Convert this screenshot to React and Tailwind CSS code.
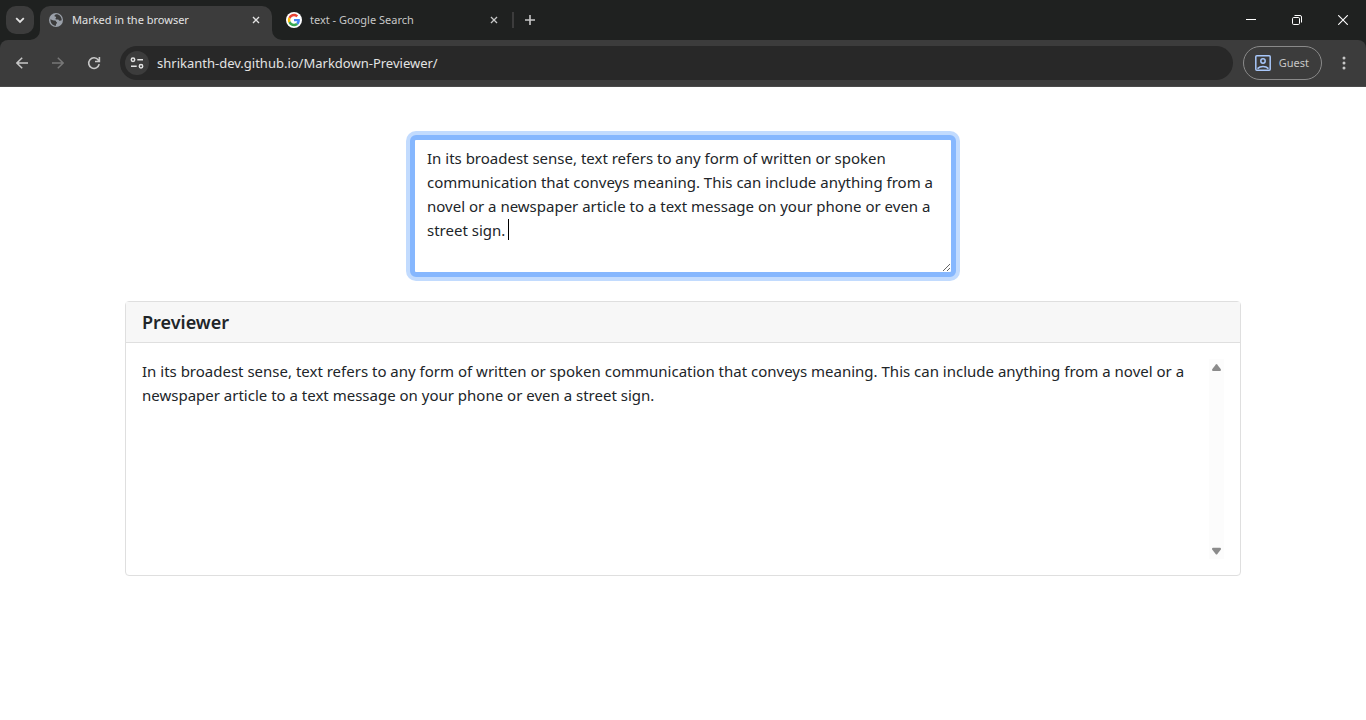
import { useState } from "react";

const INITIAL_TEXT =
  "In its broadest sense, text refers to any form of written or spoken communication that conveys meaning. This can include anything from a novel or a newspaper article to a text message on your phone or even a street sign. ";

function CloseGlyph({ className }) {
  return (
    <svg viewBox="0 0 10 10" className={className} fill="none" stroke="currentColor" strokeWidth="1.6" aria-hidden="true">
      <path d="M1.2 1.2 8.8 8.8M8.8 1.2 1.2 8.8" />
    </svg>
  );
}

function GlobeIcon() {
  return (
    <svg viewBox="0 0 16 16" className="size-4 shrink-0" aria-hidden="true">
      <circle cx="8" cy="8" r="7" fill="#9aa0a9" />
      <path
        d="M2.4 7.2 4.8 8.2c.9.3 1.5.1 2.3.3 1 .3.7 1.4 1.6 1.7.6.2.4.9-.1 1.3-.7.5-.6 1-.6 2.2C5 13.7 2.2 11 2.4 7.2ZM8.2 2.3c-.9.5-1.900.9-1.7 1.8.2.8 1.4.5 1.6 1.3.2.7-1 .9-.7 1.6.4.8 1.7.2 2.6.5.9.4 1 1.3 2 1.3.7 0 1.2-.4 1.7-.6C13.7 5 11.5 2.3 8.2 2.3Z"
        fill="#3c3c3c"
      />
    </svg>
  );
}

function GoogleIcon() {
  return (
    <svg viewBox="0 0 48 48" className="size-4 shrink-0" aria-hidden="true">
      <circle cx="24" cy="24" r="24" fill="#fff" />
      <g transform="translate(5.5 5.5) scale(.77)">
        <path fill="#EA4335" d="M24 9.500c3.540 0 6.710 1.220 9.210 3.600l6.850-6.850C35.900 2.380 30.470 0 24 0 14.620 0 6.510 5.380 2.560 13.220l7.980 6.190C12.430 13.720 17.740 9.500 24 9.500z" />
        <path fill="#4285F4" d="M46.980 24.550c0-1.570-.15-3.090-.38-4.550H24v9.020h12.940c-.58 2.960-2.260 5.480-4.780 7.180l7.730 6c4.510-4.180 7.090-10.360 7.090-17.650z" />
        <path fill="#FBBC05" d="M10.530 28.590c-.48-1.450-.76-2.990-.76-4.590s.27-3.140.76-4.590l-7.980-6.190C.92 16.460 0 20.120 0 24c0 3.880.92 7.540 2.560 10.780l7.970-6.190z" />
        <path fill="#34A853" d="M24 48c6.480 0 11.930-2.130 15.890-5.810l-7.730-6c-2.150 1.450-4.920 2.300-8.160 2.300-6.260 0-11.570-4.220-13.470-9.910l-7.980 6.190C6.510 42.620 14.620 48 24 48z" />
      </g>
    </svg>
  );
}

function TabStrip() {
  return (
    <header className="flex h-10 items-end bg-[#1f2120] pl-1.5 text-[#e3e3e3]">
      <button type="button" aria-label="Search tabs" className="mb-1.5 grid h-7 w-7 shrink-0 place-items-center rounded-[10px] bg-[#3c3c3c]">
        <svg viewBox="0 0 10 10" className="size-2.5" fill="none" stroke="currentColor" strokeWidth="1.8" aria-hidden="true">
          <path d="M1.2 3.2 5 7l3.800-3.800" />
        </svg>
      </button>
      <div className="relative ml-1.5 flex h-[34px] w-[232px] shrink-0 items-center rounded-t-[10px] bg-[#3c3c3c] pr-3 pb-1.5 pl-2">
        <svg viewBox="0 0 10 10" className="absolute bottom-0 -left-2.5 size-2.5" fill="#3c3c3c" aria-hidden="true">
          <path d="M10 0v10H0A10 10 0 0 0 10 0Z" />
        </svg>
        <svg viewBox="0 0 10 10" className="absolute -right-2.5 bottom-0 size-2.5" fill="#3c3c3c" aria-hidden="true">
          <path d="M0 0v10h10A10 10 0 0 1 0 0Z" />
        </svg>
        <GlobeIcon />
        <span className="ml-2 flex-1 text-[11px] leading-4 whitespace-nowrap">Marked in the browser</span>
        <button type="button" aria-label="Close Marked in the browser">
          <CloseGlyph className="size-2" />
        </button>
      </div>
      <div className="flex h-[34px] w-60 shrink-0 items-center pr-3.5 pb-1.5 pl-3.5 text-[#c7c7c7]">
        <GoogleIcon />
        <span className="ml-2 flex-1 text-[11px] leading-4 whitespace-nowrap">text - Google Search</span>
        <button type="button" aria-label="Close text - Google Search">
          <CloseGlyph className="size-2" />
        </button>
      </div>
      <div className="mb-3 h-4 w-0.5 shrink-0 bg-[#3c3c3c]" />
      <button type="button" aria-label="New tab" className="mb-2 ml-1 grid size-6 place-items-center text-[#c7c7c7]">
        <svg viewBox="0 0 12 12" className="size-3" fill="none" stroke="currentColor" strokeWidth="1.6" aria-hidden="true">
          <path d="M6 1v10M1 6h10" />
        </svg>
      </button>
      <div className="ml-auto flex h-10 text-white">
        <button type="button" aria-label="Minimize" className="grid w-[46px] place-items-center">
          <svg viewBox="0 0 10 10" className="size-2.5" stroke="currentColor" aria-hidden="true">
            <path d="M0 4.5h10" />
          </svg>
        </button>
        <button type="button" aria-label="Restore" className="grid w-[46px] place-items-center">
          <svg viewBox="0 0 10 10" className="size-2.5" fill="none" stroke="currentColor" aria-hidden="true">
            <rect x=".5" y="2.5" width="7" height="7" rx="1.2" />
            <path d="M2.5.5H8A1.500 1.500 0 0 1 9.500 2v5.500" />
          </svg>
        </button>
        <button type="button" aria-label="Close window" className="grid w-[46px] place-items-center">
          <svg viewBox="0 0 10 10" className="size-2.5" stroke="currentColor" strokeWidth="1.1" aria-hidden="true">
            <path d="m.2.2 9.600 9.600M9.800.2.2 9.800" />
          </svg>
        </button>
      </div>
    </header>
  );
}

function Toolbar() {
  return (
    <div className="bg-[#1f2120]">
      <nav aria-label="Browser toolbar" className="flex h-[47px] items-center rounded-t-lg border-b border-[#4a4a4a] bg-[#3c3c3c] pl-3 text-[#c7c7c7]">
        <button type="button" aria-label="Back" className="grid size-5 place-items-center">
          <svg viewBox="0 0 12 12" className="size-3" fill="none" stroke="currentColor" strokeWidth="1.5" aria-hidden="true">
            <path d="M12 6H1M6.200.7.9 6l5.300 5.300" />
          </svg>
        </button>
        <button type="button" aria-label="Forward" disabled className="ml-4 grid size-5 place-items-center text-[#777777]">
          <svg viewBox="0 0 12 12" className="size-3" fill="none" stroke="currentColor" strokeWidth="1.5" aria-hidden="true">
            <path d="M0 6h11M5.800.7 11.100 6l-5.300 5.300" />
          </svg>
        </button>
        <button type="button" aria-label="Reload" className="ml-4 grid size-5 place-items-center">
          <svg viewBox="0 0 14 14" className="size-3.5" fill="none" stroke="currentColor" strokeWidth="1.6" aria-hidden="true">
            <path d="M12.200 8.200A5.300 5.300 0 1 1 11.300 4L12.500 5.300M12.400 1v4.500H8" />
          </svg>
        </button>
        <div className="ml-4 flex h-[34px] flex-1 items-center rounded-full bg-[#282828] pl-[5px]">
          <button type="button" aria-label="View site information" className="grid size-6 place-items-center rounded-full bg-[#3c3c3c] text-[#e3e3e3]">
            <svg viewBox="0 0 14 12" className="h-3 w-3.5" fill="none" stroke="currentColor" strokeWidth="1.5" aria-hidden="true">
              <circle cx="3" cy="2.800" r="1.700" />
              <path d="M7.300 2.800H13M1 9.200h5.700" />
              <circle cx="11" cy="9.200" r="1.700" />
            </svg>
          </button>
          <input
            type="text"
            aria-label="Address"
            defaultValue="shrikanth-dev.github.io/Markdown-Previewer/"
            className="ml-2 h-6 min-w-0 flex-1 bg-transparent text-[13px] text-[#e3e3e3] outline-none"
          />
        </div>
        <button type="button" className="ml-2.5 flex h-[34px] items-center rounded-full border border-[#8a8a8a] pr-3 pl-[11px]">
          <svg viewBox="0 0 16 16" className="size-4" fill="none" stroke="#a8c7fa" strokeWidth="1.5" aria-hidden="true">
            <rect x=".8" y=".8" width="14.400" height="14.400" rx="1" />
            <circle cx="8" cy="6" r="2.200" />
            <path d="M2.500 13.600c3-2.900 8-2.900 11 0" />
          </svg>
          <span className="ml-2 text-[11px] leading-4">Guest</span>
        </button>
        <button type="button" aria-label="Browser menu" className="mr-3 ml-3 grid size-5 place-items-center">
          <svg viewBox="0 0 4 16" className="h-4 w-1" fill="currentColor" aria-hidden="true">
            <circle cx="2" cy="3" r="1.500" />
            <circle cx="2" cy="8" r="1.500" />
            <circle cx="2" cy="13" r="1.500" />
          </svg>
        </button>
      </nav>
    </div>
  );
}

function ScrollTrack() {
  return (
    <div className="flex w-[15px] shrink-0 flex-col items-center justify-between bg-[#fcfcfc] py-1 text-[#8b8b8b]">
      <svg viewBox="0 0 9 8" className="h-2 w-[9px]" fill="currentColor" aria-hidden="true">
        <path d="M3.800 1.500q.7-.8 1.400 0L8.800 6.300Q9.300 8 8 8H1Q-.3 8 .2 6.300Z" />
      </svg>
      <svg viewBox="0 0 9 8" className="h-2 w-[9px]" fill="currentColor" aria-hidden="true">
        <path d="M3.800 7.200q.7.800 1.400 0L8.800 2.400Q9.300.7 8 .7H1Q-.3.7.2 2.400Z" />
      </svg>
    </div>
  );
}

export default function App() {
  const [text, setText] = useState(INITIAL_TEXT);

  return (
    <div className="min-h-screen bg-white font-['Noto_Sans',sans-serif]">
      <TabStrip />
      <Toolbar />
      <main className="mx-auto max-w-[1140px] px-3 pt-12 text-[15px] leading-6 text-[#212529]">
        <div className="relative mx-auto w-full max-w-[546px]">
          <textarea
            aria-label="Markdown"
            value={text}
            onChange={(event) => setText(event.target.value)}
            className="block h-[142px] w-full resize rounded-md border-[5px] border-[#86b7fe] bg-white px-3 py-1.5 caret-transparent ring-4 ring-[#c2dbfe] outline-none"
          />
          <span className="absolute top-[84px] left-[98px] h-[21px] w-px bg-black" aria-hidden="true" />
        </div>
        <section className="mt-6 rounded border border-[#dfdfdf]">
          <h1 className="border-b border-[#dfdfdf] bg-[#f7f7f7] px-4 py-2 text-lg leading-6 font-semibold">Previewer</h1>
          <div className="p-4">
            <div className="flex h-[200px]">
              <p className="min-w-0 flex-1">{text}</p>
              <ScrollTrack />
            </div>
          </div>
        </section>
      </main>
    </div>
  );
}
